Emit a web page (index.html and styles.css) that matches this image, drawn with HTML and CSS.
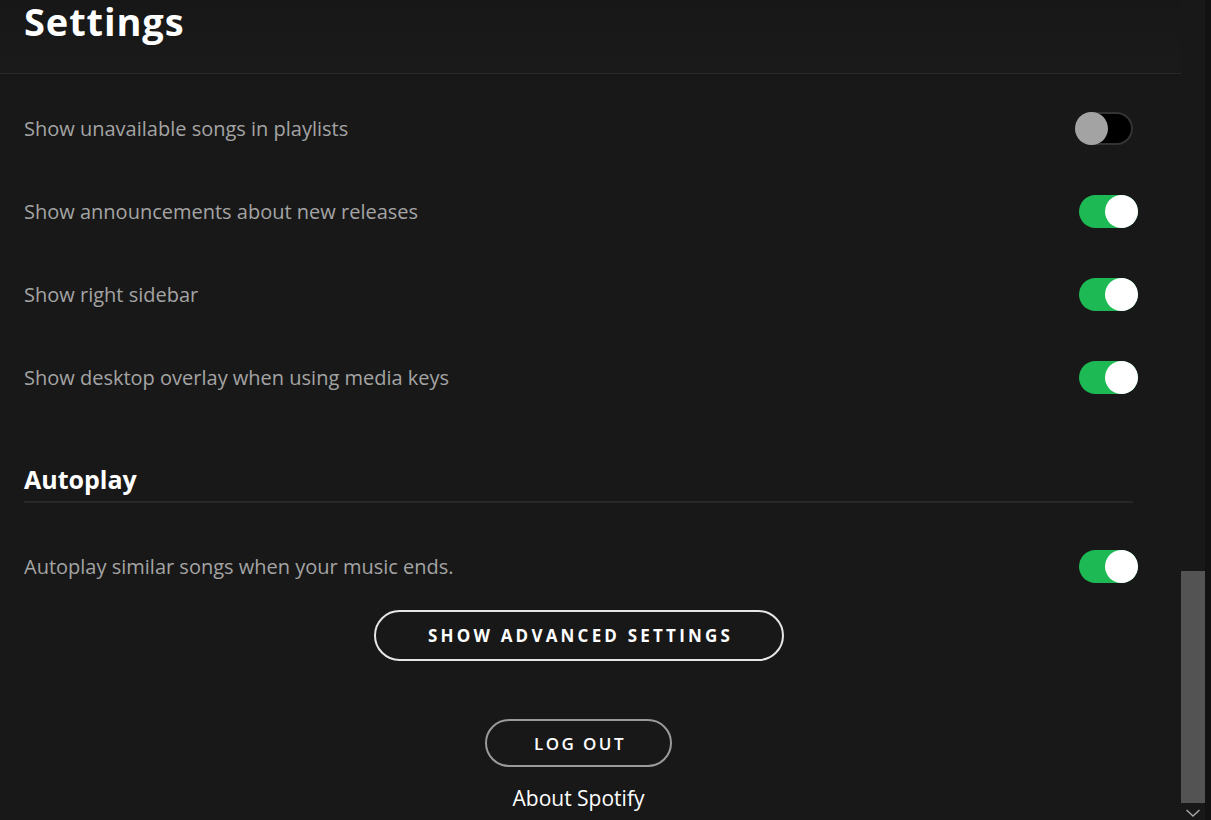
FILE: index.html
```
<!DOCTYPE html>
<html>
<head>
<meta charset="utf-8">
<link rel="stylesheet" href="styles.css">
</head>
<body>
<div class="app">
  <main class="main">
    <header class="header">
      <h1 class="title">Settings</h1>
    </header>
    <div class="content">
      <div class="row">
        <span class="label">Show unavailable songs in playlists</span>
        <span class="toggle off"><span class="knob"></span></span>
      </div>
      <div class="row">
        <span class="label">Show announcements about new releases</span>
        <span class="toggle on"><span class="knob"></span></span>
      </div>
      <div class="row">
        <span class="label">Show right sidebar</span>
        <span class="toggle on"><span class="knob"></span></span>
      </div>
      <div class="row">
        <span class="label">Show desktop overlay when using media keys</span>
        <span class="toggle on"><span class="knob"></span></span>
      </div>
      <h2 class="section">Autoplay</h2>
      <div class="row">
        <span class="label">Autoplay similar songs when your music ends.</span>
        <span class="toggle on"><span class="knob"></span></span>
      </div>
      <div class="actions">
        <button class="btn btn-advanced">SHOW ADVANCED SETTINGS</button>
        <button class="btn btn-logout">LOG OUT</button>
        <div class="about">About Spotify</div>
      </div>
    </div>
  </main>
  <aside class="scrollbar">
    <div class="track">
      <div class="thumb"></div>
    </div>
    <svg class="chev" width="16" height="10" viewBox="0 0 16 10"><path d="M1.5 2 L8 8 L14.5 2" fill="none" stroke="#a8a8a8" stroke-width="1.4"/></svg>
    <div class="edge"></div>
  </aside>
</div>
</body>
</html>
```

FILE: styles.css
```
html, body {
  margin: 0;
  padding: 0;
  background: #181818;
  overflow: hidden;
}
body {
  font-family: "Open Sans", "Liberation Sans", sans-serif;
  color: #fff;
}
.app {
  display: flex;
  width: 1211px;
  height: 820px;
}
.main {
  width: 1181px;
  flex: none;
  height: 820px;
  overflow: hidden;
}
.header {
  height: 74px;
  border-bottom: 1px solid #282828;
  background: linear-gradient(#171717, #1a1a1a);
  box-sizing: border-box;
  padding: 0 24px;
}
.title {
  margin: 0;
  font-size: 38px;
  font-weight: 700;
  line-height: 43px;
  letter-spacing: 0.9px;
}
.content {
  width: 1109px;
  padding: 13px 24px 0;
}
.row {
  height: 83px;
  display: flex;
  align-items: center;
  justify-content: space-between;
}
.label {
  font-size: 20px;
  color: #a4a4a4;
}
.toggle {
  position: relative;
  width: 58px;
  height: 33px;
  border-radius: 17px;
  box-sizing: border-box;
  flex: none;
}
.toggle.on {
  background: #1db954;
  width: 59px;
  margin-right: -5px;
}
.toggle.off {
  background: #000;
  border: 2px solid #333;
}
.knob {
  position: absolute;
  width: 33px;
  height: 33px;
  border-radius: 50%;
  top: 0;
}
.on .knob {
  right: 0;
  background: #fff;
}
.off .knob {
  left: -2px;
  top: -2px;
  background: #a3a3a3;
}
.section {
  margin: 45px 0 22px;
  font-size: 25px;
  font-weight: 700;
  line-height: 30px;
  padding-bottom: 7px;
  border-bottom: 2px solid #282828;
}
.actions {
  display: flex;
  flex-direction: column;
  align-items: center;
}
.btn {
  font-family: "Open Sans", "Liberation Sans", sans-serif;
  background: transparent;
  color: #fff;
  border-radius: 26px;
  cursor: pointer;
}
.btn-advanced {
  margin-top: 2px;
  height: 51px;
  width: 410px;
  border: 2px solid #e6e6e6;
  font-size: 17px;
  font-weight: 700;
  letter-spacing: 3.2px;
  padding: 0 0 0 4px;
}
.btn-logout {
  margin-top: 58px;
  height: 48px;
  width: 187px;
  border: 2px solid #9a9a9a;
  font-size: 17px;
  font-weight: 600;
  letter-spacing: 2.4px;
  padding: 0 0 0 3px;
}
.about {
  margin-top: 18px;
  font-size: 21px;
  line-height: 26px;
  color: #fff;
}
.scrollbar {
  position: relative;
  width: 30px;
  flex: none;
  height: 820px;
  background: #181818;
}
.track {
  width: 24px;
  height: 803px;
  padding-top: 571px;
  box-sizing: border-box;
}
.thumb {
  width: 24px;
  height: 232px;
  background: #535353;
}
.chev {
  position: absolute;
  left: 4px;
  top: 808px;
}
.edge {
  position: absolute;
  right: 0;
  top: 0;
  width: 6px;
  height: 820px;
  background: #121212;
}
```
